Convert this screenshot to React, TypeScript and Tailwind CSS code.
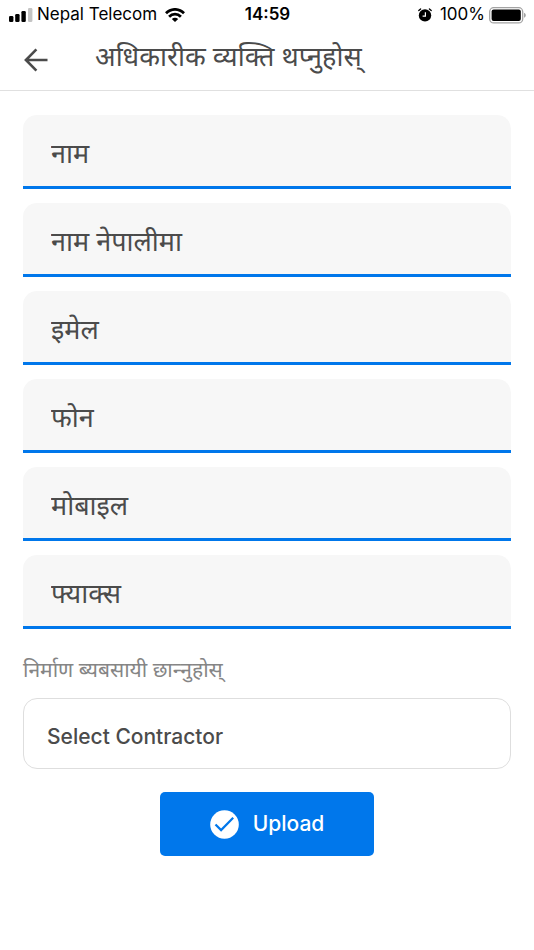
const fields = [
  { id: 'name', label: 'नाम', type: 'text' },
  { id: 'name-nepali', label: 'नाम नेपालीमा', type: 'text' },
  { id: 'email', label: 'इमेल', type: 'email' },
  { id: 'phone', label: 'फोन', type: 'tel' },
  { id: 'mobile', label: 'मोबाइल', type: 'tel' },
  { id: 'fax', label: 'फ्याक्स', type: 'tel' },
];

function SignalIcon() {
  return (
    <svg width="24" height="14" viewBox="0 0 24 14" aria-hidden="true">
      <rect x="0" y="8" width="4.4" height="6" rx="1.3" />
      <rect x="6.2" y="6" width="4.4" height="8" rx="1.3" />
      <rect x="12.4" y="3" width="4.4" height="11" rx="1.3" />
      <rect x="19" y="0" width="4.4" height="14" rx="1.3" fill="#c4c4c4" />
    </svg>
  );
}

function WifiIcon() {
  return (
    <svg width="20" height="14" viewBox="0 0 20 14" aria-hidden="true">
      <g fill="none" stroke="#000" strokeWidth="2.7">
        <path d="M1 5.3C6 0 14 0 19 5.3" />
        <path d="M4.1 8.8c3.3-3.5 8.5-3.5 11.8 0" />
      </g>
      <path d="M6.8 11c2-1.7 4.4-1.7 6.4 0L10 14z" />
    </svg>
  );
}

function AlarmIcon() {
  return (
    <svg width="14" height="14" viewBox="0 0 14 14" aria-hidden="true">
      <circle cx="7" cy="7.4" r="6.2" />
      <path d="M.8 2.6 2.6 1M13.2 2.6 11.4 1" stroke="#000" strokeWidth="1.3" strokeLinecap="round" />
      <path d="M7.4 4.2v4H4.6" fill="none" stroke="#fff" strokeWidth="1.2" />
    </svg>
  );
}

function BatteryIcon() {
  return (
    <svg width="37" height="17" viewBox="0 0 37 17" aria-hidden="true">
      <rect x=".7" y=".7" width="33" height="15.2" rx="4" fill="none" stroke="#a3a3a3" strokeWidth="1.3" />
      <rect x="2.6" y="2.6" width="29.2" height="11.4" rx="2" />
      <path d="M35 5.8c2.4 1 2.4 4 0 5z" fill="#a3a3a3" />
    </svg>
  );
}

function BackIcon() {
  return (
    <svg width="24" height="24" viewBox="0 0 24 24" fill="none" stroke="#4b4b4b" strokeWidth="2.6" aria-hidden="true">
      <path d="M23.5 12H2.2M12.4 1.4 1.9 12l10.5 10.6" />
    </svg>
  );
}

function CheckIcon() {
  return (
    <svg width="29" height="29" viewBox="0 0 29 29" aria-hidden="true">
      <circle cx="14.5" cy="14.5" r="14.3" fill="#fff" />
      <path d="m5.5 14.4 5.6 5.7L23.2 7.8" fill="none" stroke="#0077eb" strokeWidth="2.2" />
    </svg>
  );
}

export default function App() {
  return (
    <div className="min-h-screen bg-white font-['Noto_Sans',sans-serif] text-[#4b4b4b]">
      <div className="grid h-[30px] grid-cols-[1fr_auto_1fr] items-center pr-2 pl-[9px] font-[Inter,sans-serif] text-[17px] text-black">
        <div className="flex items-center gap-2">
          <div className="flex items-center gap-1">
            <SignalIcon />
            <span>Nepal Telecom</span>
          </div>
          <WifiIcon />
        </div>
        <span className="font-semibold">14:59</span>
        <div className="flex items-center justify-end gap-1">
          <div className="flex items-center gap-2">
            <AlarmIcon />
            <span>100%</span>
          </div>
          <BatteryIcon />
        </div>
      </div>

      <header className="flex h-[61px] items-center gap-[47px] border-b border-[#e0e0e0] px-6 pb-1">
        <button type="button" aria-label="Back" className="pt-1">
          <BackIcon />
        </button>
        <h1 className="pb-1 text-[27px] leading-8">अधिकारीक व्यक्ति थप्‍नुहोस्</h1>
      </header>

      <form className="flex flex-col px-[23px] pt-6">
        <div className="flex flex-col gap-3.5">
          {fields.map((field) => (
            <input
              key={field.id}
              id={field.id}
              name={field.id}
              type={field.type}
              aria-label={field.label}
              placeholder={field.label}
              className="h-[74px] w-full rounded-t-[14px] border-b-3 border-[#0077eb] bg-[#f7f7f7] px-7 pt-1 text-[27px] outline-none placeholder:text-[#4b4b4b]"
            />
          ))}
        </div>

        <label htmlFor="contractor" className="mt-[26px] text-[21px] leading-7 text-[#858585]">
          निर्माण ब्यबसायी छान्‍नुहोस्
        </label>
        <select
          id="contractor"
          className="mt-[15px] h-[71px] w-full appearance-none rounded-[14px] border border-[#dedede] bg-white px-[23px] pt-1.5 font-[Inter,sans-serif] text-[21px] font-medium outline-none"
        >
          <option>Select Contractor</option>
        </select>

        <button
          type="button"
          className="mt-[23px] flex h-16 w-[214px] items-center justify-center gap-3.5 self-center rounded-[5px] bg-[#0077eb] font-[Inter,sans-serif] text-[21px] font-medium text-white"
        >
          <CheckIcon />
          Upload
        </button>
      </form>
    </div>
  );
}
